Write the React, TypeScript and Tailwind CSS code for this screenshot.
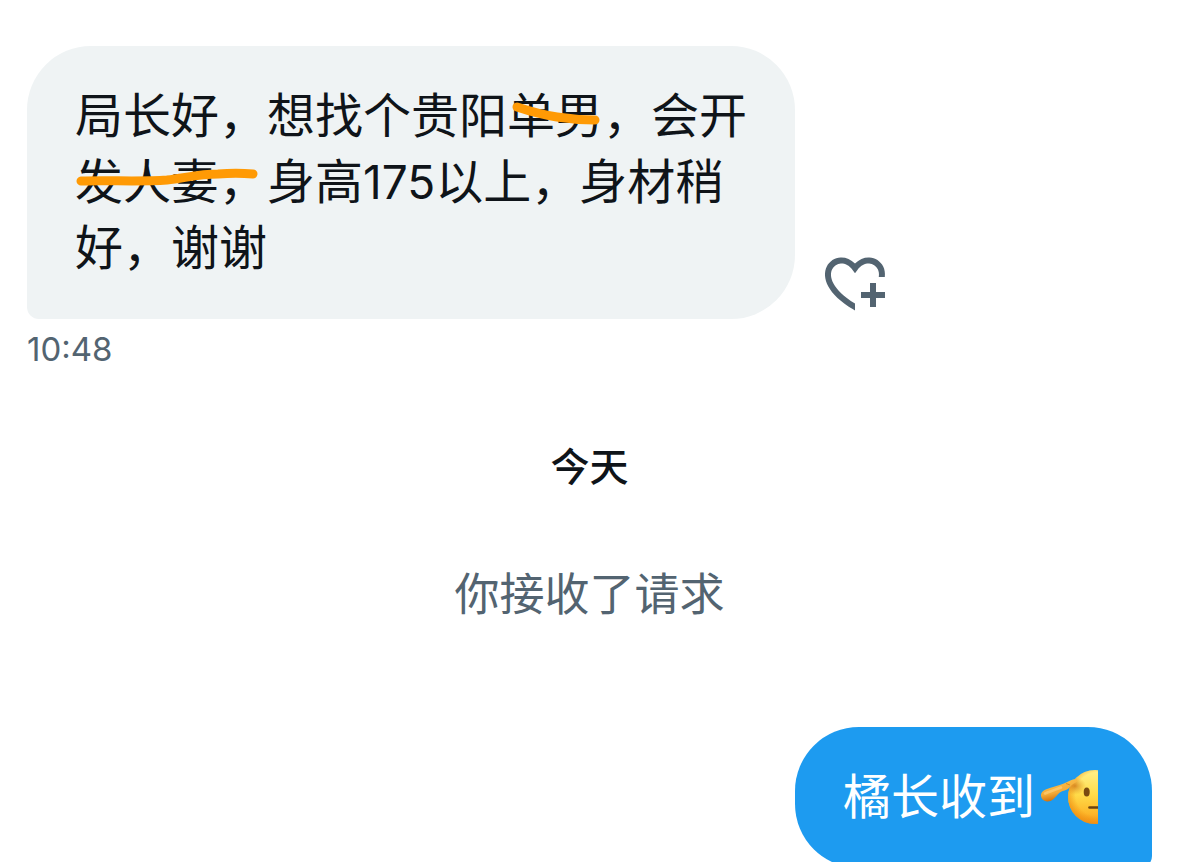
const SaluteEmoji = () => {
  return (
    <svg
      role="img"
      aria-label="敬礼"
      viewBox="0 0 69 66"
      className="w-[69px] h-[66px] shrink-0"
    >
      <defs>
        <linearGradient id="face" x1="0" y1="0" x2="0" y2="1">
          <stop offset="0" stopColor="#fff08a" />
          <stop offset="0.45" stopColor="#ffdc4a" />
          <stop offset="0.8" stopColor="#fdb72a" />
          <stop offset="1" stopColor="#f3981a" />
        </linearGradient>
        <radialGradient id="edge" cx="0.55" cy="0.45" r="0.58">
          <stop offset="0.7" stopColor="#f08a0c" stopOpacity="0" />
          <stop offset="1" stopColor="#ec8a10" stopOpacity="0.75" />
        </radialGradient>
        <radialGradient id="shade" cx="0.5" cy="0.5" r="0.5">
          <stop offset="0" stopColor="#c96a10" stopOpacity="0.7" />
          <stop offset="1" stopColor="#e08a18" stopOpacity="0" />
        </radialGradient>
        <linearGradient id="hand" x1="0.35" y1="0.1" x2="0.6" y2="0.9">
          <stop offset="0" stopColor="#f9bd48" />
          <stop offset="0.6" stopColor="#f3aa38" />
          <stop offset="1" stopColor="#cf6f0c" />
        </linearGradient>
        <clipPath id="half">
          <rect x="0" y="0" width="63" height="66" />
        </clipPath>
        <clipPath id="head">
          <circle cx="60" cy="33" r="27" />
        </clipPath>
      </defs>
      <g clipPath="url(#half)">
        <circle cx="60" cy="33" r="27" fill="url(#face)" />
        <circle cx="60" cy="33" r="27" fill="url(#edge)" />
        <g clipPath="url(#head)">
          <ellipse cx="40" cy="22" rx="11" ry="9" fill="url(#shade)" />
        </g>
        <ellipse cx="51.7" cy="28" rx="3" ry="4.6" fill="#7a4a10" />
        <path d="M54.5 43.5H64" stroke="#6b4210" strokeWidth="2.6" strokeLinecap="round" />
      </g>
      <path
        d="M6 31.500C6 28 8.500 26.300 12 25C17 23.300 21 22.300 25.500 20.800C30 19.200 34.500 16.800 38 15.600C40 14.900 41.800 15.200 41.900 16.500C42 18 40.500 18.700 38.500 19.800C35.500 21.800 34.500 24.500 31.500 25.800C29 26.900 26.500 27 24.500 28.800C22 31 20.500 33.500 18 35.500C16 37 13.500 37.800 11 37.200C8 36.500 6 34.500 6 31.500Z"
        fill="url(#hand)"
      />
      <path
        d="M10 29.500C14 27.500 20 26 26 23.500"
        fill="none"
        stroke="#ffd98a"
        strokeOpacity="0.55"
        strokeWidth="2.6"
        strokeLinecap="round"
      />
      <path d="M31 19.500L35 21" stroke="#cf7a14" strokeOpacity="0.7" strokeWidth="1" />
    </svg>
  );
};

const AddReactionIcon = () => {
  return (
    <svg viewBox="0 0 24 24" fill="currentColor" aria-hidden="true" className="w-[72px] h-[72px]">
      <path d="M17 12v3h-2.998v2h3v3h2v-3h3v-2h-3.001v-3H17zm-5 6.839c-3.871-2.34-6.053-4.639-7.127-6.609-1.112-2.04-1.031-3.7-.479-4.82.561-1.13 1.667-1.84 2.91-1.91 1.222-.06 2.68.51 3.892 2.16l.806 1.09.805-1.09c1.211-1.65 2.668-2.22 3.89-2.16 1.242.07 2.347.78 2.908 1.91.334.677.49 1.554.321 2.59h2.011c.153-1.283-.039-2.469-.539-3.48-.887-1.79-2.647-2.91-4.601-3.01-1.65-.09-3.367.56-4.796 2.01-1.43-1.45-3.147-2.1-4.798-2.01-1.954.1-3.714 1.22-4.601 3.01-.896 1.81-.846 4.17.514 6.67 1.353 2.48 4.003 5.12 8.382 7.67l.502.299v-2.32z" />
    </svg>
  );
};

export default function App() {
  return (
    <main
      lang="zh-CN"
      className="h-screen overflow-hidden bg-white px-[27px] pt-[46px] text-[#0f1419] font-[Inter,'Noto_Sans_CJK_SC',sans-serif]"
    >
      <div className="flex items-end gap-6">
        <div className="relative max-w-[768px] rounded-[64px] rounded-bl-[12px] bg-[#eff3f4] px-12 pt-[37px] pb-[38px]">
          <p className="text-[48px] leading-[66px]">
            局长好，想找个贵阳单男，会开发人妻，身高
            <span className="text-[46px] leading-none">175</span>
            以上，身材稍好，谢谢
          </p>
          {/* marker strokes over the words */}
          <svg
            viewBox="0 0 768 273"
            fill="none"
            stroke="#ff9a05"
            strokeLinecap="round"
            strokeLinejoin="round"
            aria-hidden="true"
            className="absolute inset-0 w-full h-full pointer-events-none"
          >
            <path d="M490 61C502 65 517 69 530 71C543 73 555 74 568 74" strokeWidth="9" />
            <path d="M54 135C82 134 112 136 140 134C158 132 172 128 191 128C204 127 214 127 226 128" strokeWidth="9" />
          </svg>
        </div>
        <button type="button" aria-label="添加回应" className="text-[#536471]">
          <AddReactionIcon />
        </button>
      </div>
      <time className="block mt-[10px] text-[33px] leading-[40px] text-[#536471]">10:48</time>

      <h2 className="mt-[74px] text-center text-[39px] leading-[48px] font-medium">今天</h2>
      <p className="mt-[74px] text-center text-[45px] leading-[60px] text-[#536471]">
        你接收了请求
      </p>

      <div className="mt-[102px] flex justify-end">
        <div className="flex rounded-[64px] rounded-br-[12px] bg-[#1d9bf0] px-12 pt-[37px] pb-[38px] text-white">
          <p className="text-[48px] leading-[66px]">橘长收到</p>
          <SaluteEmoji />
        </div>
      </div>
    </main>
  );
}
